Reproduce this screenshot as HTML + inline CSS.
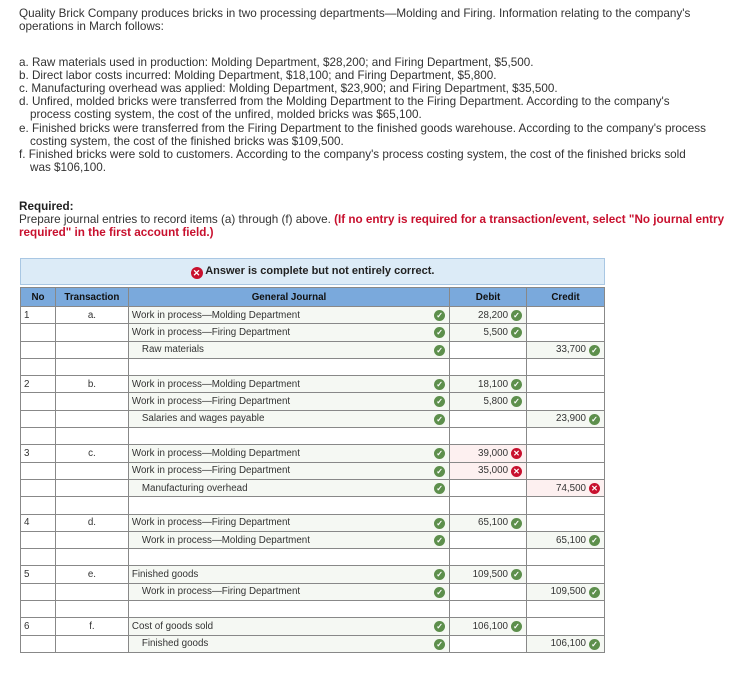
<!DOCTYPE html>
<html><head><style>
body{margin:0;background:#fff;font-family:"Liberation Sans",sans-serif;color:#333;}
.t{position:absolute;left:19px;font-size:11.7px;line-height:13px;white-space:nowrap;}
.in{left:30px}
#banner{position:absolute;left:20px;top:258px;width:583px;height:25px;background:#dcebf7;border:1px solid #a9c7e3;text-align:center;font-size:11px;font-weight:bold;line-height:25px;color:#222}
table{position:absolute;left:20px;top:287px;border-collapse:collapse;width:585px;font-size:9.8px;}
td,th{border:1px solid #888;height:17.3px;padding:0 3px;box-sizing:border-box}
th{background:#7aa9dc;color:#111;font-weight:bold;height:19px;font-size:9.8px}
.g{background:#f5f8f3;position:relative}
.r{background:#fdf0f0}
.num{text-align:right;padding-right:18px;position:relative}
.ic{position:absolute;right:4px;top:3px;width:11px;height:11px;border-radius:50%;background:#5d8f4c;color:#fff;font-size:8px;line-height:11px;text-align:center;font-weight:bold}
.x{background:#c8102e}
.c{text-align:center}
</style></head><body>
<div class="t" style="top:7px">Quality Brick Company produces bricks in two processing departments—Molding and Firing. Information relating to the company's</div>
<div class="t" style="top:20px">operations in March follows:</div>
<div class="t" style="top:56px">a. Raw materials used in production: Molding Department, $28,200; and Firing Department, $5,500.</div>
<div class="t" style="top:69px">b. Direct labor costs incurred: Molding Department, $18,100; and Firing Department, $5,800.</div>
<div class="t" style="top:82px">c. Manufacturing overhead was applied: Molding Department, $23,900; and Firing Department, $35,500.</div>
<div class="t" style="top:95px">d. Unfired, molded bricks were transferred from the Molding Department to the Firing Department. According to the company's</div>
<div class="t in" style="top:108px">process costing system, the cost of the unfired, molded bricks was $65,100.</div>
<div class="t" style="top:122px">e. Finished bricks were transferred from the Firing Department to the finished goods warehouse. According to the company's process</div>
<div class="t in" style="top:135px">costing system, the cost of the finished bricks was $109,500.</div>
<div class="t" style="top:148px">f. Finished bricks were sold to customers. According to the company's process costing system, the cost of the finished bricks sold</div>
<div class="t in" style="top:161px">was $106,100.</div>
<div class="t" style="top:200px;font-weight:bold;color:#222">Required:</div>
<div class="t" style="top:213px">Prepare journal entries to record items (a) through (f) above. <b style="color:#c8102e">(If no entry is required for a transaction/event, select "No journal entry</b></div>
<div class="t" style="top:226px;font-weight:bold;color:#c8102e">required" in the first account field.)</div>
<div id="banner"><span style="display:inline-block;width:12px;height:12px;border-radius:50%;background:#c8102e;color:#fff;font-size:9px;line-height:12px;vertical-align:-2px">✕</span> Answer is complete but not entirely correct.</div>
<table>
<colgroup><col style="width:35px"><col style="width:73px"><col style="width:322px"><col style="width:77px"><col style="width:78px"></colgroup>
<tr><th>No</th><th>Transaction</th><th>General Journal</th><th>Debit</th><th>Credit</th></tr>
<tr><td>1</td><td class="c">a.</td><td class="g">Work in process—Molding Department<span class="ic">✓</span></td><td class="num g">28,200<span class="ic">✓</span></td><td></td></tr>
<tr><td></td><td></td><td class="g">Work in process—Firing Department<span class="ic">✓</span></td><td class="num g">5,500<span class="ic">✓</span></td><td></td></tr>
<tr><td></td><td></td><td class="g" style="padding-left:13px">Raw materials<span class="ic">✓</span></td><td></td><td class="num g">33,700<span class="ic">✓</span></td></tr>
<tr><td></td><td></td><td></td><td></td><td></td></tr>
<tr><td>2</td><td class="c">b.</td><td class="g">Work in process—Molding Department<span class="ic">✓</span></td><td class="num g">18,100<span class="ic">✓</span></td><td></td></tr>
<tr><td></td><td></td><td class="g">Work in process—Firing Department<span class="ic">✓</span></td><td class="num g">5,800<span class="ic">✓</span></td><td></td></tr>
<tr><td></td><td></td><td class="g" style="padding-left:13px">Salaries and wages payable<span class="ic">✓</span></td><td></td><td class="num g">23,900<span class="ic">✓</span></td></tr>
<tr><td></td><td></td><td></td><td></td><td></td></tr>
<tr><td>3</td><td class="c">c.</td><td class="g">Work in process—Molding Department<span class="ic">✓</span></td><td class="num r">39,000<span class="ic x">✕</span></td><td></td></tr>
<tr><td></td><td></td><td class="g">Work in process—Firing Department<span class="ic">✓</span></td><td class="num r">35,000<span class="ic x">✕</span></td><td></td></tr>
<tr><td></td><td></td><td class="g" style="padding-left:13px">Manufacturing overhead<span class="ic">✓</span></td><td></td><td class="num r">74,500<span class="ic x">✕</span></td></tr>
<tr><td></td><td></td><td></td><td></td><td></td></tr>
<tr><td>4</td><td class="c">d.</td><td class="g">Work in process—Firing Department<span class="ic">✓</span></td><td class="num g">65,100<span class="ic">✓</span></td><td></td></tr>
<tr><td></td><td></td><td class="g" style="padding-left:13px">Work in process—Molding Department<span class="ic">✓</span></td><td></td><td class="num g">65,100<span class="ic">✓</span></td></tr>
<tr><td></td><td></td><td></td><td></td><td></td></tr>
<tr><td>5</td><td class="c">e.</td><td class="g">Finished goods<span class="ic">✓</span></td><td class="num g">109,500<span class="ic">✓</span></td><td></td></tr>
<tr><td></td><td></td><td class="g" style="padding-left:13px">Work in process—Firing Department<span class="ic">✓</span></td><td></td><td class="num g">109,500<span class="ic">✓</span></td></tr>
<tr><td></td><td></td><td></td><td></td><td></td></tr>
<tr><td>6</td><td class="c">f.</td><td class="g">Cost of goods sold<span class="ic">✓</span></td><td class="num g">106,100<span class="ic">✓</span></td><td></td></tr>
<tr><td></td><td></td><td class="g" style="padding-left:13px">Finished goods<span class="ic">✓</span></td><td></td><td class="num g">106,100<span class="ic">✓</span></td></tr>
</table>
</body></html>
